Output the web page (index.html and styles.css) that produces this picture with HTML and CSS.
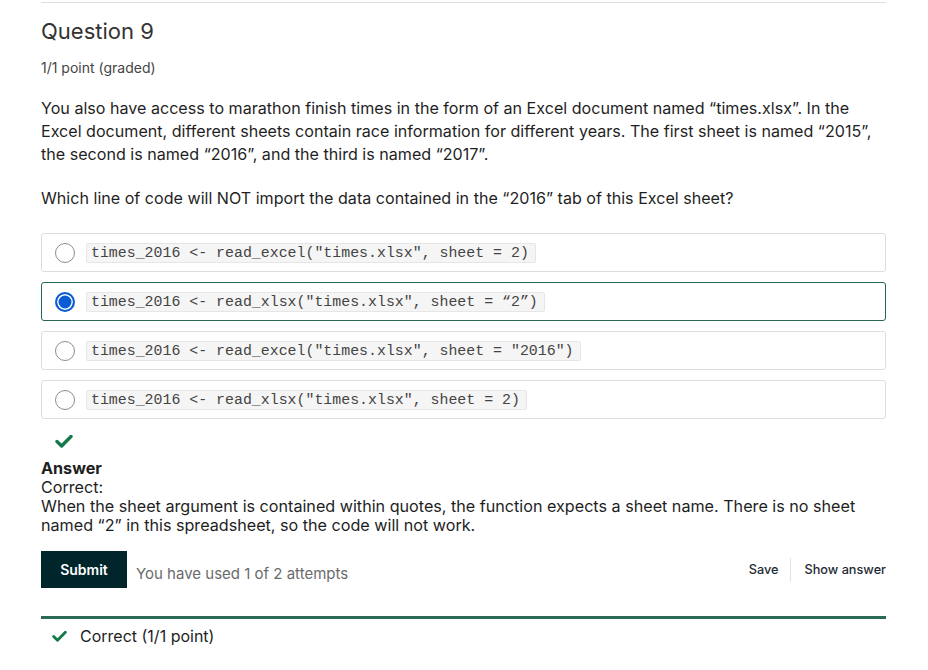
FILE: index.html
```html
<!DOCTYPE html>
<html lang="en">
<head>
<meta charset="utf-8">
<title>Question 9</title>
<link rel="stylesheet" href="styles.css">
</head>
<body>
<div class="page">
  <div class="problem">
    <h2 class="title">Question 9</h2>
    <div class="points">1/1 point (graded)</div>
    <p class="para">You also have access to marathon finish times in the form of an Excel document named “times.xlsx”. In the Excel document, different sheets contain race information for different years. The first sheet is named “2015”, the second is named “2016”, and the third is named “2017”.</p>
    <p class="para q">Which line of code will NOT import the data contained in the “2016” tab of this Excel sheet?</p>

    <div class="options">
      <label class="option"><span class="radio"></span><code class="code">times_2016 &lt;- read_excel("times.xlsx", sheet = 2)</code></label>
      <label class="option selected"><span class="radio"></span><code class="code">times_2016 &lt;- read_xlsx("times.xlsx", sheet = “2”)</code></label>
      <label class="option"><span class="radio"></span><code class="code">times_2016 &lt;- read_excel("times.xlsx", sheet = "2016")</code></label>
      <label class="option"><span class="radio"></span><code class="code">times_2016 &lt;- read_xlsx("times.xlsx", sheet = 2)</code></label>
    </div>

    <div class="status">
      <svg class="check" viewBox="0 0 18 14" width="18" height="14"><path d="M2 7.5 L6.6 12 L16 2.5" fill="none" stroke="#127a4b" stroke-width="3.4" stroke-linecap="round" stroke-linejoin="round"/></svg>
    </div>

    <div class="answer">
      <div class="answer-title">Answer</div>
      <div>Correct:</div>
      <div>When the sheet argument is contained within quotes, the function expects a sheet name. There is no sheet named “2” in this spreadsheet, so the code will not work.</div>
    </div>

    <div class="actions">
      <button class="submit">Submit</button>
      <span class="attempts">You have used 1 of 2 attempts</span>
      <div class="links">
        <span class="link">Save</span>
        <span class="sep"></span>
        <span class="link">Show answer</span>
      </div>
    </div>

    <div class="notice">
      <svg class="check small" viewBox="0 0 18 14" width="16" height="12"><path d="M2 7.5 L6.6 12 L16 2.5" fill="none" stroke="#127a4b" stroke-width="3.4" stroke-linecap="round" stroke-linejoin="round"/></svg>
      <span>Correct (1/1 point)</span>
    </div>
  </div>
</div>
</body>
</html>
```

FILE: styles.css
```css
* { box-sizing: border-box; }
html, body { margin: 0; padding: 0; background: #fff; }
body {
  font-family: Inter, "Noto Sans", sans-serif;
  color: #1e1e1e;
}
.page {
  padding: 2px 42px 0 41px;
}
.problem {
  border-top: 1px solid #dedede;
  width: 845px;
}
.title {
  margin: 14px 0 0 0;
  font-size: 22px;
  line-height: 28px;
  font-weight: 400;
  color: #333;
}
.points {
  margin-top: 13px;
  font-size: 14px;
  line-height: 20px;
  color: #454545;
}
.para {
  margin: 19px 0 0 0;
  font-size: 16.1px;
  line-height: 23px;
  color: #1f1f1f;
}
.para.q {
  margin-top: 21px;
}
.options {
  margin-top: 23px;
  display: flex;
  flex-direction: column;
  gap: 10px;
}
.option {
  display: flex;
  align-items: center;
  height: 39px;
  border: 1px solid #dddddd;
  border-radius: 3px;
  padding: 0 13px;
}
.option.selected {
  border-color: #276653;
}
.radio {
  width: 20px;
  height: 20px;
  border-radius: 50%;
  border: 1px solid #8d8d8d;
  flex: none;
  background: #fff;
}
.option.selected .radio {
  border: 2px solid #0b5dd6;
  background: #0b5dd6;
  box-shadow: inset 0 0 0 1.5px #fff;
}
.code {
  margin-left: 11px;
  font-family: "Courier New", "Liberation Mono", monospace;
  font-size: 14.9px;
  line-height: 18px;
  color: #444;
  background: #f5f5f5;
  border: 1px solid #e6e6e6;
  padding: 0 6px 0 4px;
  border-radius: 2px;
}
.status {
  margin-top: 15px;
  padding-left: 14px;
  height: 14px;
  display: flex;
}
.answer {
  margin-top: 11px;
  font-size: 16.15px;
  line-height: 19px;
  color: #1e1e1e;
}
.answer-title {
  font-weight: 700;
}
.actions {
  margin-top: 16px;
  display: flex;
  align-items: center;
}
.submit {
  width: 86px;
  height: 37px;
  border: none;
  border-radius: 0;
  background: #00262b;
  color: #fff;
  font-family: Inter, sans-serif;
  font-size: 14px;
  font-weight: 600;
  padding: 0;
}
.attempts {
  margin-left: 9px;
  margin-top: 7px;
  font-size: 15px;
  color: #6b6b6b;
}
.links {
  margin-left: auto;
  margin-top: 0;
  display: flex;
  align-items: center;
  font-size: 12.7px;
  font-weight: 500;
  color: #1e2a33;
}
.sep {
  width: 1px;
  height: 24px;
  background: #e2e2e2;
  margin: 0 13px 0 12px;
}
.notice {
  margin-top: 28px;
  border-top: 3px solid #2b6b55;
  display: flex;
  align-items: center;
  padding: 6px 0 0 11px;
  font-size: 16px;
  line-height: 22px;
  color: #1e1e1e;
}
.check.small {
  width: 15px;
  margin-right: 13px;
}
```
